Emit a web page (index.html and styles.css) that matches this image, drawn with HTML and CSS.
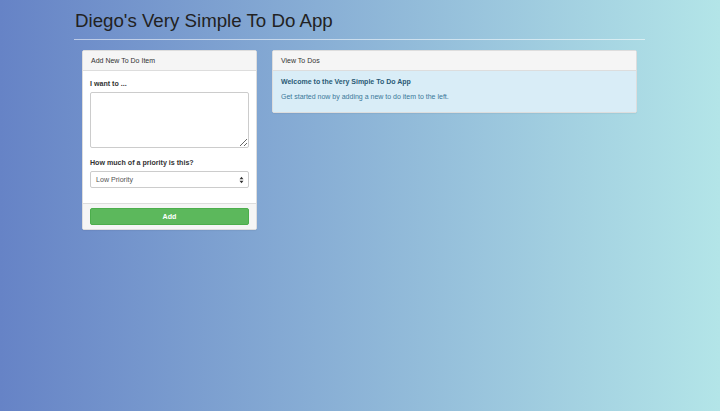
FILE: index.html
```html
<!DOCTYPE html>
<html>
<head>
<meta charset="utf-8">
<link rel="stylesheet" href="styles.css">
</head>
<body>
<div class="page">
  <h1 class="title">Diego's Very Simple To Do App</h1>
  <hr class="rule">
  <div class="row">
    <div class="panel panel-left">
      <div class="panel-heading">Add New To Do Item</div>
      <div class="panel-body">
        <label class="label">I want to ...</label>
        <textarea class="textarea"></textarea>
        <label class="label label-2">How much of a priority is this?</label>
        <div class="select">
          <span>Low Priority</span>
          <svg class="caret" width="5" height="8" viewBox="0 0 5 8"><path d="M0.5 3.2 L2.5 0.8 L4.5 3.2 Z M0.5 4.8 L2.5 7.2 L4.5 4.8 Z" fill="#333"/></svg>
        </div>
      </div>
      <div class="panel-footer">
        <button class="btn">Add</button>
      </div>
    </div>
    <div class="panel panel-right">
      <div class="panel-heading">View To Dos</div>
      <div class="alert">
        <div class="alert-title">Welcome to the Very Simple To Do App</div>
        <div class="alert-text">Get started now by adding a new to do item to the left.</div>
      </div>
    </div>
  </div>
</div>
</body>
</html>
```
FILE: styles.css
```css
html, body {
  margin: 0;
  padding: 0;
  height: 100%;
}
body {
  background: linear-gradient(to right, #6683c6, #b3e5e8);
  font-family: "Liberation Sans", Arial, sans-serif;
  color: #333;
}
.page {
  padding-left: 74px;
  width: 571px;
}
.title {
  margin: 0;
  padding-top: 10px;
  font-size: 18.7px;
  font-weight: normal;
  line-height: 22px;
  color: #222;
  padding-left: 1px;
}
.rule {
  margin: 7px 0 0 0;
  border: 0;
  height: 1px;
  background: rgba(255, 255, 255, 0.55);
}
.row {
  display: flex;
  gap: 15px;
  margin-left: 8px;
  margin-top: 10px;
  align-items: flex-start;
}
.panel {
  background: #fff;
  border: 1px solid #ddd;
  border-radius: 2px;
  box-shadow: 0 1px 1px rgba(0, 0, 0, 0.05);
  box-sizing: border-box;
}
.panel-left {
  width: 175px;
}
.panel-right {
  width: 365px;
}
.panel-heading {
  background: #f5f5f5;
  border-bottom: 1px solid #ddd;
  box-sizing: border-box;
  padding: 0 8px;
  font-size: 7px;
  line-height: 19px;
  color: #333;
  height: 20px;
}
.panel-body {
  padding: 8px 7px 15px 7px;
  display: flex;
  flex-direction: column;
}
.label {
  font-size: 7.1px;
  font-weight: bold;
  line-height: 10px;
  color: #333;
  margin-bottom: 3px;
}
.label-2 {
  margin-top: 10px;
}
.textarea {
  display: block;
  width: 100%;
  height: 56px;
  box-sizing: border-box;
  border: 1px solid #ccc;
  border-radius: 2px;
  resize: vertical;
  margin: 0;
  background: #fff;
}
.select {
  display: flex;
  align-items: center;
  justify-content: space-between;
  height: 17px;
  box-sizing: border-box;
  border: 1px solid #ccc;
  border-radius: 2px;
  padding: 0 4px 0 5px;
  font-size: 7.1px;
  color: #555;
  background: #fff;
}
.caret {
  display: block;
}
.panel-footer {
  background: #f5f5f5;
  border-top: 1px solid #ddd;
  padding: 4px 7px 4px 7px;
}
.btn {
  display: block;
  width: 100%;
  height: 17px;
  background: #5cb85c;
  border: 1px solid #4cae4c;
  border-radius: 2px;
  color: #fff;
  font-family: "Liberation Sans", Arial, sans-serif;
  font-size: 7.1px;
  font-weight: bold;
  padding: 0;
}
.alert {
  background: #d9edf7;
  color: #3a7899;
  padding: 6px 8px 10px 8px;
  font-size: 7px;
}
.alert-title {
  font-weight: bold;
  line-height: 10px;
  color: #2a5a75;
}
.alert-text {
  margin-top: 5px;
  line-height: 10px;
}
```
